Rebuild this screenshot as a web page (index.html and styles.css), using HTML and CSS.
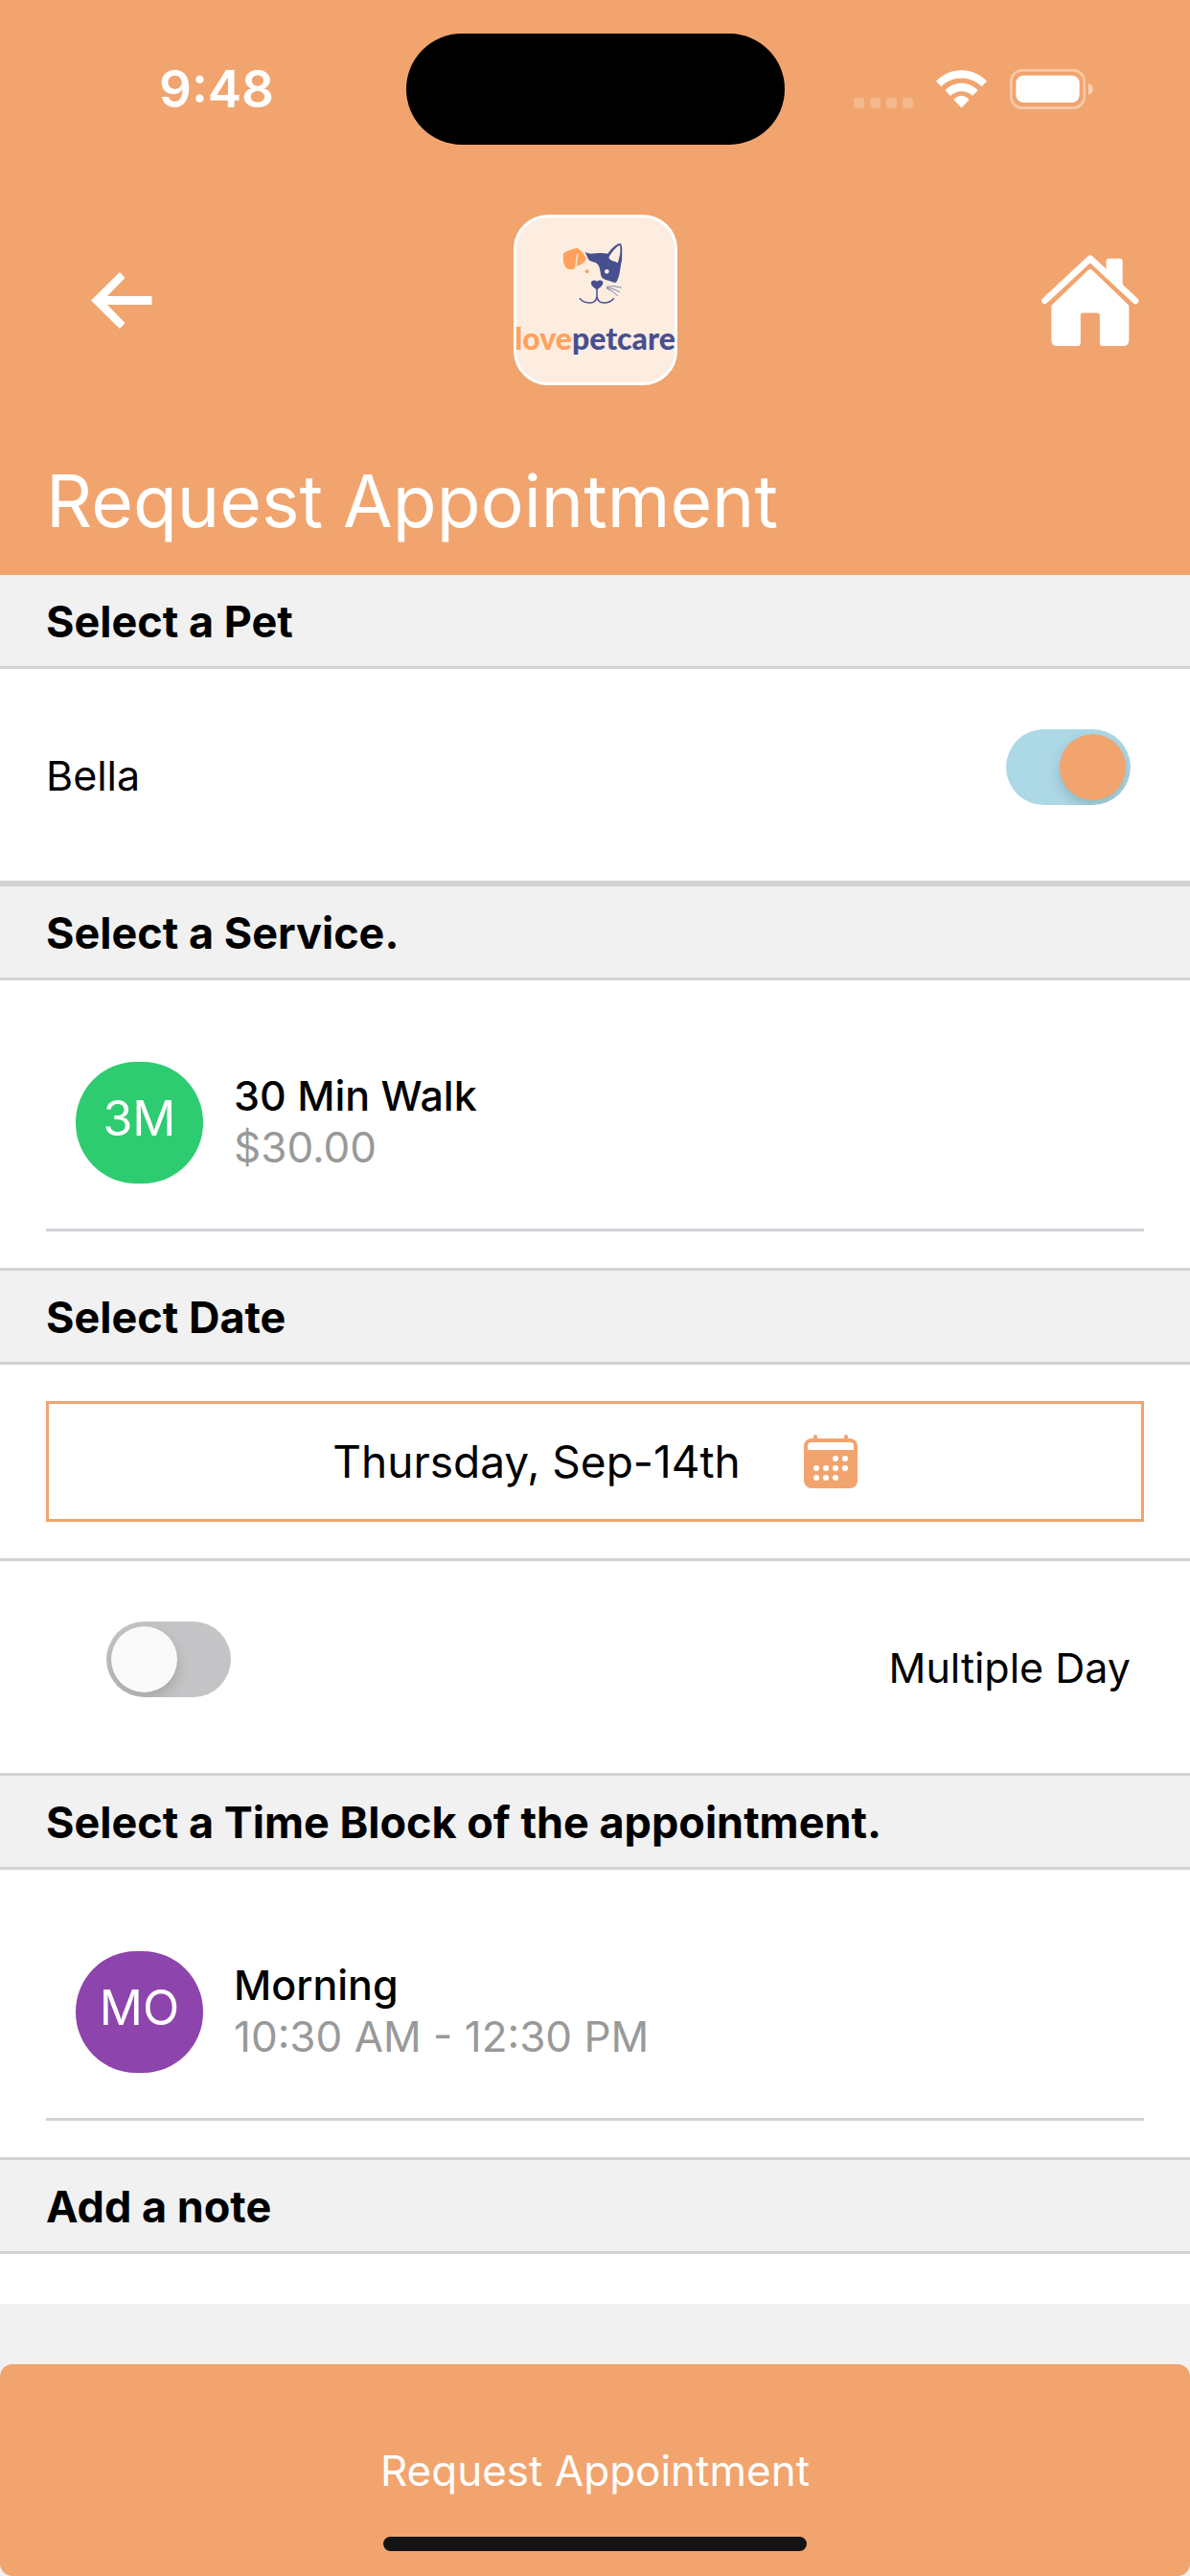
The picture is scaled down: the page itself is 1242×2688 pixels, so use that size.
FILE: index.html
```html
<!DOCTYPE html>
<html lang="en">
<head>
<meta charset="utf-8">
<meta name="viewport" content="width=device-width, initial-scale=1">
<title>Request Appointment</title>
<link rel="stylesheet" href="styles.css">
</head>
<body class="page">
<header class="header">
  <div class="status">
    <time class="status-time">9:48</time>
    <div class="island"></div>
    <div class="status-icons">
      <svg width="62" height="42" viewBox="0 0 62 42" fill="#fff" fill-opacity=".22" aria-hidden="true">
        <rect y="30" width="11" height="11" rx="3"/>
        <rect x="17" y="30" width="11" height="11" rx="3"/>
        <rect x="34" y="30" width="11" height="11" rx="3"/>
        <rect x="51" y="30" width="11" height="11" rx="3"/>
      </svg>
      <svg width="53" height="40" viewBox="287 96 160 120" fill="#fff" aria-hidden="true">
        <path d="M287 131C332 85 402 85 447 131L431 148C396 112 338 112 303 148Z"/>
        <path d="M315 160C345 130 389 130 419 160L402 177C383 158 351 158 332 177Z"/>
        <path d="M342 189C356 173 378 173 391 189L367 215Z"/>
      </svg>
      <svg width="87" height="42" viewBox="517 93 261 126" aria-hidden="true">
        <rect x="521" y="97" width="229" height="118" rx="35" fill="none" stroke="#fff" stroke-opacity=".42" stroke-width="8"/>
        <rect x="536" y="113" width="199" height="85" rx="24" fill="#fff"/>
        <path d="M763 137Q777 143 777 155Q777 168 763 174Z" fill="#fff" fill-opacity=".5"/>
      </svg>
    </div>
  </div>

  <nav class="nav">
    <button class="icon-button back" type="button" aria-label="Back">
      <svg width="64" height="59" viewBox="95 284 64 59" fill="#fff" aria-hidden="true">
        <path d="M125 284L130.500 290L112 309H158.500V318H112L130.500 337L125 343L95 313.500Z"/>
      </svg>
    </button>
    <div class="logo">
      <svg width="68" height="67" viewBox="202 126 204 201" aria-hidden="true">
        <path fill="#ffa15c" d="M247 146C256 148 272 166 276 178C276 190 262 200 244 204C242 210 236 214 226 214C208 212 202 190 205 165C207 157 235 149 247 146Z"/>
        <path fill="none" stroke="#fcede0" stroke-width="4" d="M250 164C245 178 247 190 243 208"/>
        <circle cx="279" cy="220" r="6" fill="#ffa15c"/>
        <path fill="#474f90" d="M273 159C280 163 286 164 292 164C312 161 330 161 344 164C354 150 370 133 382 132C391 133 389 160 388 186C382 205 384 235 370 254L362 254C350 247 328 246 324 236C318 215 322 203 306 192C296 188 283 188 281 176Z"/>
        <path fill="#fcede0" d="M347 176C354 160 372 141 382 137C386 157 380 180 375 193C366 186 352 188 347 176Z"/>
        <circle cx="341" cy="220" r="7" fill="#fcede0"/>
        <path fill="#474f90" d="M310 278C300 268 290 264 292 254C294 246 306 246 310 252C314 246 328 246 329 254C330 264 320 268 310 278Z"/>
        <path fill="none" stroke="#474f90" stroke-width="4.500" stroke-linecap="round" d="M310 275V298C308 312 298 318 288 318C274 318 262 312 257 305M310 298C312 312 320 318 332 318C346 318 356 312 362 305"/>
        <path fill="none" stroke="#474f90" stroke-width="2" d="M340 268Q365 262 388 271M340 271Q362 272 382 284M341 273Q360 280 376 297"/>
      </svg>
      <div class="logo-name"><span class="logo-love">love</span>petcare</div>
    </div>
    <a class="home" href="#home" aria-label="Home">
      <svg width="102" height="95" viewBox="51 47 305 284" fill="#fff" aria-hidden="true">
        <path fill="none" stroke="#fff" stroke-width="20" stroke-linecap="round" stroke-linejoin="round" d="M61 190L203 58L344 190"/>
        <path d="M253 105V66Q253 58 262 58H296Q304 58 304 66V152Z"/>
        <path d="M197 94Q203 88 209 94L324 205V312Q324 331 305 331H243Q233 331 233 321V236Q233 228 225 228H181Q173 228 173 236V321Q173 331 163 331H100Q82 331 82 312V205Z"/>
      </svg>
    </a>
  </nav>

  <h1 class="title">Request Appointment</h1>
</header>

<main>
  <h2 class="heading">Select a Pet</h2>
  <div class="toggle-row">
    <label for="bella">Bella</label>
    <input class="switch" id="bella" type="checkbox" role="switch" checked>
  </div>

  <h2 class="heading">Select a Service.</h2>
  <div class="options">
    <button class="option" type="button">
      <span class="avatar avatar-green">3M</span>
      <span class="option-text">
        <span class="option-name">30 Min Walk</span>
        <span class="option-detail">$30.00</span>
      </span>
    </button>
  </div>

  <h2 class="heading">Select Date</h2>
  <div class="date-row">
    <button class="date" type="button">
      <span>Thursday, Sep-14th</span>
      <svg width="56" height="56" viewBox="0 0 56 56" fill="#f1a46e" aria-hidden="true">
        <rect y="4" width="56" height="52" rx="8"/>
        <path d="M10 6V2a2 2 0 0 1 4 0V6ZM42 6V2a2 2 0 0 1 4 0V6Z"/>
        <path fill="#fff" d="M4 16V12Q4 8 8 8H48Q52 8 52 12V16Z"/>
        <g fill="#fff">
          <circle cx="33" cy="25" r="3"/><circle cx="43" cy="25" r="3"/>
          <circle cx="13" cy="35" r="3"/><circle cx="23" cy="35" r="3"/><circle cx="33" cy="35" r="3"/><circle cx="43" cy="35" r="3"/>
          <circle cx="13" cy="45" r="3"/><circle cx="23" cy="45" r="3"/><circle cx="33" cy="45" r="3"/>
        </g>
      </svg>
    </button>
  </div>
  <div class="toggle-row toggle-row-start">
    <input class="switch" id="multiple" type="checkbox" role="switch">
    <label for="multiple">Multiple Day</label>
  </div>

  <h2 class="heading heading-joined">Select a Time Block of the appointment.</h2>
  <div class="options">
    <button class="option" type="button">
      <span class="avatar avatar-purple">MO</span>
      <span class="option-text">
        <span class="option-name">Morning</span>
        <span class="option-detail">10:30 AM - 12:30 PM</span>
      </span>
    </button>
  </div>

  <h2 class="heading"><label for="note">Add a note</label></h2>
  <textarea class="note" id="note" rows="1"></textarea>
</main>

<footer class="footer">
  <button class="submit" type="submit">Request Appointment</button>
  <div class="home-indicator"></div>
</footer>
</body>
</html>
```
FILE: styles.css
```css
:root {
  --orange: #f1a46e;
  --grey: #f1f1f1;
  --line: #d3d3d3;
  --gutter: 48px;
}

* {
  box-sizing: border-box;
}

.page {
  display: flex;
  flex-direction: column;
  min-height: 100vh;
  margin: 0;
  background: var(--grey);
  color: #000;
  font-family: Inter, "Liberation Sans", sans-serif;
  font-size: 44px;
  line-height: 54px;
}

button {
  padding: 0;
  border: 0;
  background: none;
  color: inherit;
  font: inherit;
  text-align: left;
  cursor: pointer;
}

svg {
  display: block;
  flex: none;
}

/* Header */

.header {
  padding: 35px 0 32px;
  background: var(--orange);
  color: #fff;
}

.status,
.nav {
  display: grid;
  grid-template-columns: 1fr auto 1fr;
  align-items: center;
}

.status-time {
  padding-left: 166px;
  font-size: 53px;
  font-weight: 600;
}

.island {
  width: 395px;
  height: 116px;
  border-radius: 58px;
  background: #000;
}

.status-icons {
  display: flex;
  align-items: center;
  gap: 24px;
  padding-left: 72px;
}

.nav {
  margin-top: 73px;
}

.back {
  justify-self: start;
  margin-left: 95px;
}

.home {
  justify-self: end;
  margin-right: 53px;
}

.logo {
  display: flex;
  flex-direction: column;
  align-items: center;
  gap: 16px;
  width: 171px;
  height: 178px;
  padding-top: 25px;
  border: 3px solid #fff;
  border-radius: 36px;
  background: #fcede0;
}

.logo-name {
  color: #474f90;
  font-family: Lato, sans-serif;
  font-size: 32px;
  font-weight: 900;
  line-height: 36px;
}

.logo-love {
  color: #ffa15c;
}

.title {
  margin: 76px var(--gutter) 0;
  font-size: 75px;
  font-weight: 400;
  line-height: 90px;
}

/* Section headings */

.heading {
  margin: 0;
  padding: 22px var(--gutter) 19px;
  border-top: 3px solid var(--line);
  border-bottom: 3px solid var(--line);
  background: var(--grey);
  font-size: 45px;
  font-weight: 700;
}

.heading:first-child,
.heading-joined {
  border-top: 0;
}

/* Toggles */

.toggle-row {
  display: flex;
  align-items: center;
  justify-content: space-between;
  min-height: 224px;
  padding: 0 62px 0 var(--gutter);
  border-bottom: 3px solid var(--line);
  background: #fff;
  font-size: 43px;
}

.toggle-row-start {
  padding-left: 111px;
}

.switch {
  appearance: none;
  width: 130px;
  height: 79px;
  margin: 0 0 16px;
  padding: 5px;
  border-radius: 40px;
  background: #c4c4c6;
  overflow: hidden;
  cursor: pointer;
}

.switch::before {
  content: "";
  display: block;
  width: 69px;
  height: 69px;
  border-radius: 50%;
  background: #fafafa;
  box-shadow: 0 6px 14px rgba(0, 0, 0, .16);
}

.switch:checked {
  background: #add8e6;
}

.switch:checked::before {
  margin-left: 51px;
  background: var(--orange);
}

/* Option lists */

.options {
  padding: 0 var(--gutter) 38px;
  background: #fff;
}

.option {
  display: flex;
  align-items: center;
  gap: 32px;
  width: 100%;
  padding: 85px 0 47px 31px;
  border-bottom: 3px solid #d0d2d8;
}

.avatar {
  display: flex;
  align-items: center;
  justify-content: center;
  width: 133px;
  height: 127px;
  padding-bottom: 9px;
  border-radius: 63px;
  color: #fff;
  font-size: 50px;
}

.avatar-green {
  background: #2ecc71;
}

.avatar-purple {
  background: #8e44ad;
}

.option-text {
  display: flex;
  flex-direction: column;
  padding-bottom: 3px;
}

.option-name {
  font-size: 43px;
  font-weight: 500;
}

.option-detail {
  color: #999;
}

/* Date */

.date-row {
  padding: 38px var(--gutter);
  border-bottom: 3px solid var(--line);
  background: #fff;
}

.date {
  display: flex;
  align-items: center;
  justify-content: center;
  gap: 66px;
  width: 100%;
  min-height: 126px;
  border: 3px solid var(--orange);
  font-size: 46px;
}

/* Note */

.note {
  display: block;
  width: 100%;
  height: 52px;
  padding: 0 var(--gutter);
  border: 0;
  background: #fff;
  font: inherit;
  resize: none;
}

/* Footer */

.footer {
  position: relative;
  margin-top: auto;
}

.submit {
  width: 100%;
  min-height: 221px;
  border-radius: 13px;
  background: var(--orange);
  color: #fff;
  text-align: center;
}

.home-indicator {
  position: absolute;
  right: 0;
  bottom: 26px;
  left: 0;
  width: 442px;
  height: 15px;
  margin: 0 auto;
  border-radius: 8px;
  background: #141414;
}
```
